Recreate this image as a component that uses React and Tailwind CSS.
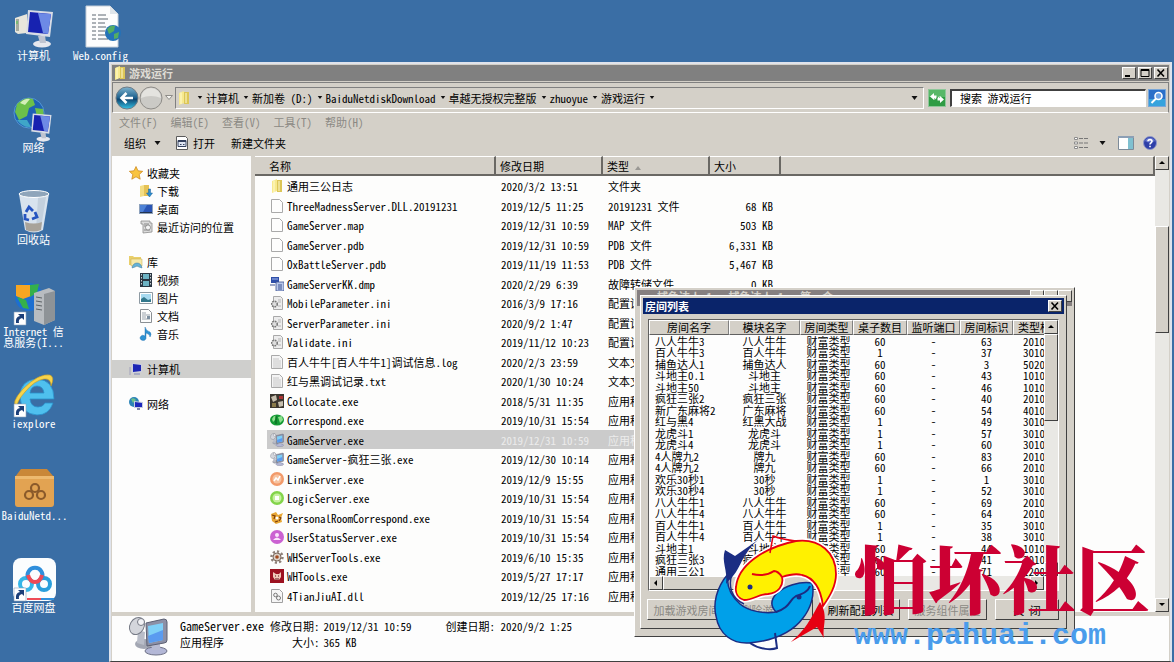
import { useState } from "react";

const files = [
  { name: "通用三公日志", date: "2020/3/2 13:51", type: "文件夹", size: "", icon: "folder" },
  { name: "ThreeMadnessServer.DLL.20191231", date: "2019/12/5 11:25", type: "20191231 文件", size: "68 KB", icon: "blank" },
  { name: "GameServer.map", date: "2019/12/31 10:59", type: "MAP 文件", size: "503 KB", icon: "blank" },
  { name: "GameServer.pdb", date: "2019/12/31 10:59", type: "PDB 文件", size: "6,331 KB", icon: "blank" },
  { name: "OxBattleServer.pdb", date: "2019/11/19 11:53", type: "PDB 文件", size: "5,467 KB", icon: "blank" },
  { name: "GameServerKK.dmp", date: "2020/2/29 6:39", type: "故障转储文件", size: "0 KB", icon: "dump" },
  { name: "MobileParameter.ini", date: "2016/3/9 17:16", type: "配置设置", size: "", icon: "ini" },
  { name: "ServerParameter.ini", date: "2020/9/2 1:47", type: "配置设置", size: "", icon: "ini" },
  { name: "Validate.ini", date: "2019/11/12 10:23", type: "配置设置", size: "", icon: "ini" },
  { name: "百人牛牛[百人牛牛1]调试信息.log", date: "2020/2/3 23:59", type: "文本文档", size: "", icon: "text" },
  { name: "红与黑调试记录.txt", date: "2020/1/30 10:24", type: "文本文档", size: "", icon: "text" },
  { name: "Collocate.exe", date: "2018/5/31 11:35", type: "应用程序", size: "", icon: "collocate" },
  { name: "Correspond.exe", date: "2019/10/31 15:54", type: "应用程序", size: "", icon: "globe" },
  { name: "GameServer.exe", date: "2019/12/31 10:59", type: "应用程序", size: "", icon: "server" },
  { name: "GameServer-疯狂三张.exe", date: "2019/12/30 10:14", type: "应用程序", size: "", icon: "server" },
  { name: "LinkServer.exe", date: "2019/12/9 15:55", type: "应用程序", size: "", icon: "link" },
  { name: "LogicServer.exe", date: "2019/10/31 15:54", type: "应用程序", size: "", icon: "logic" },
  { name: "PersonalRoomCorrespond.exe", date: "2019/10/31 15:54", type: "应用程序", size: "", icon: "room" },
  { name: "UserStatusServer.exe", date: "2019/10/31 15:54", type: "应用程序", size: "", icon: "user" },
  { name: "WHServerTools.exe", date: "2019/6/10 15:35", type: "应用程序", size: "", icon: "gear" },
  { name: "WHTools.exe", date: "2019/5/27 17:17", type: "应用程序", size: "", icon: "tools" },
  { name: "4TianJiuAI.dll", date: "2019/12/25 17:16", type: "应用程序扩展", size: "", icon: "dll" },
];

const rooms = [
  ["八人牛牛3", "八人牛牛", "60", "63", "2010"],
  ["百人牛牛3", "百人牛牛", "1", "37", "3010"],
  ["捕鱼达人1", "捕鱼达人", "60", "3", "5020"],
  ["斗地主0.1", "斗地主", "60", "43", "1010"],
  ["斗地主50", "斗地主", "60", "46", "1010"],
  ["疯狂三张2", "疯狂三张", "60", "40", "2010"],
  ["新广东麻将2", "广东麻将", "60", "54", "4010"],
  ["红与黑4", "红黑大战", "1", "49", "3010"],
  ["龙虎斗1", "龙虎斗", "1", "57", "3010"],
  ["龙虎斗4", "龙虎斗", "1", "60", "3010"],
  ["4人牌九2", "牌九", "60", "83", "2010"],
  ["4人牌九2", "牌九", "60", "66", "2010"],
  ["欢乐30秒1", "30秒", "1", "1", "3010"],
  ["欢乐30秒4", "30秒", "1", "52", "3010"],
  ["八人牛牛1", "八人牛牛", "60", "69", "2010"],
  ["八人牛牛4", "八人牛牛", "60", "64", "2010"],
  ["百人牛牛1", "百人牛牛", "1", "35", "3010"],
  ["百人牛牛4", "百人牛牛", "1", "38", "3010"],
  ["斗地主1", "斗地主", "60", "44", "1010"],
  ["疯狂三张3", "疯狂三张", "60", "41", "2010"],
  ["通用三公1", "通用三公", "60", "71", "1200"],
];

const crumbs = ["计算机", "新加卷 (D:)", "BaiduNetdiskDownload", "卓越无授权完整版", "zhuoyue", "游戏运行"];

const raised = "bg-[#d4d0c8] border border-t-white border-l-white border-r-[#404040] border-b-[#404040]";
const dither = "bg-[#e9e8e4]";

const App = () => {
  const [selected, setSelected] = useState("GameServer.exe");

  return (
    <div className="relative h-screen overflow-hidden bg-[#3a6ea5] text-[11px] leading-4 text-black font-['Noto_Sans_Mono_CJK_SC','Liberation_Mono','Noto_Sans_CJK_SC',monospace]">
      <Desktop />

      {/* EXPLORER */}
      <div className="absolute left-[109px] top-[62px] right-[2px] bottom-0 flex flex-col bg-[#d4d0c8] border-2 border-b border-[#dfe3ec] border-b-[#404040] p-px pb-0">
        <TitleBar />
        <AddressBar />
        <MenuBar />
        <Toolbar />
        <div className="flex flex-1 min-h-0">
          <Sidebar />
          <FileList selected={selected} onSelect={setSelected} />
          <div className="w-[14px] shrink-0 flex flex-col">
            <ScrollButton label="向上滚动" d="M3 7h6L6 4z" />
            <div className={`flex-1 flex flex-col ${dither}`}>
              <div className="basis-[13%]" />
              <div className={`basis-1/4 ${raised}`} />
            </div>
            <ScrollButton label="向下滚动" d="M3 4h6L6 7z" />
          </div>
        </div>
        <DetailsPane />
      </div>

      <ServerWindow />
      <Brand />
    </div>
  );
};

const Desktop = () => (
  <div className="flex items-start text-white">
    <div className="w-[67px]">
      <DesktopIcon label="计算机"><ComputerIcon /></DesktopIcon>
      <DesktopIcon label="网络"><NetworkIcon /></DesktopIcon>
      <DesktopIcon label="回收站"><RecycleIcon /></DesktopIcon>
      <DesktopIcon label="Internet 信息服务(I..."><IisIcon /></DesktopIcon>
      <DesktopIcon label="iexplore"><IeIcon /></DesktopIcon>
      <DesktopIcon label="BaiduNetd..."><BoxIcon /></DesktopIcon>
      <DesktopIcon label="百度网盘"><BaiduIcon /></DesktopIcon>
    </div>
    <div className="w-[67px]">
      <DesktopIcon label="Web.config"><ConfigIcon /></DesktopIcon>
    </div>
  </div>
);

const DesktopIcon = ({ label, children }) => (
  <button className="w-full h-[92px] pt-1 flex flex-col items-center">
    <span className="block size-[46px]">{children}</span>
    <span className="w-[66px] px-px text-center leading-[11px]">{label}</span>
  </button>
);

const Caret = ({ big }) => (
  <svg viewBox="0 0 6 4" className={big ? "w-[7px] h-[4px]" : "w-[6px] h-[3px]"}>
    <path d="M0 0h6L3 4z" fill="#111" />
  </svg>
);

const ScrollButton = ({ label, d }) => (
  <button aria-label={label} className={`size-[14px] shrink-0 ${raised}`}>
    <svg viewBox="0 0 12 12" className="size-3">
      <path d={d} fill="#000" />
    </svg>
  </button>
);

const WindowButton = ({ label, children }) => (
  <button aria-label={label} className={`w-[14px] h-3 ${raised}`}>
    <svg viewBox="0 0 12 10" className="w-3 h-[10px]" fill="none" stroke="#000">
      {children}
    </svg>
  </button>
);

const TitleBar = () => (
  <div className="h-4 shrink-0 flex items-center gap-[2px] px-px bg-[#808080] text-[#dedbd4]">
    <FolderIcon />
    <h1 className="flex-1 font-bold">游戏运行</h1>
    <WindowButton label="最小化"><path d="M2 8h5" strokeWidth="2" /></WindowButton>
    <WindowButton label="最大化"><path d="M2 1.5h8v7H2zM2 2.5h8" /></WindowButton>
    <WindowButton label="关闭"><path d="M2.5 1.500l6.500 7M9 1.500l-6.500 7" strokeWidth="1.600" /></WindowButton>
  </div>
);

const AddressBar = () => (
  <div className="h-[31px] shrink-0 mt-px flex items-center border border-[#808080] border-b-white px-[2px]">
    <button aria-label="后退">
      <svg viewBox="0 0 24 24" className="size-6">
        <defs>
          <linearGradient id="back" x1="0" y1="0" x2="0" y2="1">
            <stop offset="0" stopColor="#7fb4cf" />
            <stop offset=".5" stopColor="#1c5f8c" />
            <stop offset=".55" stopColor="#0d4470" />
            <stop offset="1" stopColor="#35c3e6" />
          </linearGradient>
        </defs>
        <circle cx="12" cy="12" r="11" fill="url(#back)" stroke="#6d7b85" />
        <path d="M18 12H7M11.500 7L6.500 12l5 5" fill="none" stroke="#fff" strokeWidth="2.600" />
      </svg>
    </button>
    <button aria-label="前进">
      <svg viewBox="0 0 24 24" className="size-6">
        <circle cx="12" cy="12" r="11" fill="#cbcac6" stroke="#8e8c88" />
        <path d="M2 12a10 10 0 0 1 20 0q-10-4-20 0" fill="#e4e3df" />
      </svg>
    </button>
    <button aria-label="最近的页面" className="mx-[2px]">
      <svg viewBox="0 0 8 5" className="w-2 h-[5px]">
        <path d="M.5.500h7L4 4.500z" fill="#f5f4f0" stroke="#8e8c88" />
      </svg>
    </button>
    <nav aria-label="地址" className="flex-1 h-[22px] flex items-center border border-[#808080] border-r-white border-b-white px-px whitespace-nowrap">
      <FolderIcon />
      <span className="ml-[6px]"><Caret /></span>
      {crumbs.map((c) => (
        <span key={c} className="flex items-center gap-1 pl-[3px]">
          <a href="#">{c}</a>
          <Caret />
        </span>
      ))}
      <span className="ml-auto mr-1"><Caret big /></span>
    </nav>
    <button aria-label="刷新" className="mx-1">
      <svg viewBox="0 0 18 18" className="size-[18px]">
        <rect x=".5" y=".5" width="17" height="17" fill="#2f9c44" stroke="#8fc79a" />
        <path d="M1 1h16v7H1z" fill="#58b868" />
        <path d="M2 7.500L6 4v2.500h2.500v2.500l-2 2V9H6v2zM16 10.500L12 14v-2.500H9.500V9l2-2v2h.5V7z" fill="#fff" />
      </svg>
    </button>
    <input
      aria-label="搜索"
      defaultValue="搜索 游戏运行"
      className="w-[196px] h-[18px] px-2 bg-white border border-t-2 border-l-2 border-[#404040] border-r-white border-b-white"
    />
    <button aria-label="开始搜索" className="ml-[2px]">
      <svg viewBox="0 0 18 18" className="size-[18px]">
        <rect x=".5" y=".5" width="17" height="17" fill="#2a6fc9" stroke="#7aa7d8" />
        <path d="M1 10h16v7H1z" fill="#36a3dd" />
        <circle cx="10.500" cy="7" r="3.500" fill="#6ea4e6" stroke="#fff" strokeWidth="1.600" />
        <path d="M8 9.500L3.500 14" stroke="#fff" strokeWidth="2" />
      </svg>
    </button>
  </div>
);

const MenuBar = () => (
  <div className="h-[17px] shrink-0 flex items-center gap-[13px] pl-[7px] text-[#8b8984]">
    <button>文件(F)</button>
    <button>编辑(E)</button>
    <button>查看(V)</button>
    <button>工具(T)</button>
    <button>帮助(H)</button>
  </div>
);

const Toolbar = () => (
  <div className="h-[26px] shrink-0 flex items-center pl-3 pr-3">
    <button className="flex items-center gap-2">组织 <Caret big /></button>
    <button className="ml-[14px] flex items-center gap-1">
      <svg viewBox="0 0 14 14" className="size-[14px]">
        <path d="M1.500.500h9l2 2v11h-11z" fill="#fff" stroke="#5b5b5b" />
        <path d="M3 4.500h8v6H3z" fill="#dfe6f3" stroke="#33405e" />
        <path d="M3 5h8" stroke="#33405e" strokeWidth="2" />
        <path d="M5 8.500h1.500M8 8.500h1.500" stroke="#33405e" />
      </svg>
      打开
    </button>
    <button className="ml-4">新建文件夹</button>
    <div className="ml-auto flex items-center">
      <button aria-label="更改您的视图" className="flex items-center gap-[11px]">
        <svg viewBox="0 0 14 14" className="size-[14px]" fill="none" stroke="#8d8d8d">
          <path d="M.5 1.500h3v2h-3zM.5 6h3v2h-3zM.5 10.500h3v2h-3z" fill="#fff" />
          <path d="M5 2.500h4M10 2.500h4M5 7h4M10 7h4M5 11.500h4M10 11.500h4" stroke="#777" />
        </svg>
        <Caret big />
      </button>
      <button aria-label="显示预览窗格" className="ml-3">
        <svg viewBox="0 0 16 14" className="w-4 h-[14px]">
          <path d="M.5.500h15v13H.5z" fill="#fff" stroke="#7d8b99" />
          <path d="M0 0h16v2H0z" fill="#8c9fb5" />
          <path d="M10 2h5v11h-5z" fill="#7fc0d0" />
        </svg>
      </button>
      <button aria-label="获取帮助" className="ml-[9px]">
        <svg viewBox="0 0 14 14" className="size-[14px]">
          <circle cx="7" cy="7" r="6.500" fill="#2d3fa8" stroke="#8f97c9" />
          <path d="M2 5a5.500 5.500 0 0 1 10 0Q7 8 2 5" fill="#6475cd" />
          <path d="M5 5.300C5 3 9 3 9 5.300 9 6.800 7 6.800 7 8.500M7 9.800v1.500" fill="none" stroke="#fff" strokeWidth="1.600" />
        </svg>
      </button>
    </div>
  </div>
);

const SideItem = ({ label, icon, sub, active }) => (
  <li className={`h-[18px] ${active ? "bg-[#cfcfcd]" : ""}`}>
    <a href="#" className={`flex items-center gap-1 h-full ${sub ? "pl-[27px]" : "pl-[17px]"}`}>
      <svg viewBox="0 0 14 14" className="size-[14px]">{icon}</svg>
      {label}
    </a>
  </li>
);

const Sidebar = () => (
  <div className="w-[143px] shrink-0 bg-[#fdfdfd] border-r-4 border-[#d4d0c8] pt-2">
    <ul>
      <SideItem label="收藏夹" icon={<path d="M7 .5l2 4.300 4.700.500-3.500 3.200 1 4.700L7 10.800l-4.200 2.400 1-4.700L.3 5.300 5 4.800z" fill="#f9c440" stroke="#c98318" strokeWidth=".7" />} />
      <SideItem sub label="下载" icon={<>
        <path d="M1 2l4-1v11l-4 1z" fill="#f3dd84" /><path d="M5 1h5v11H5z" fill="#e5c256" />
        <path d="M9.500 5v4H7.500l3 4 3-4h-2V5z" fill="#2c8fd0" stroke="#1a5f98" strokeWidth=".5" />
      </>} />
      <SideItem sub label="桌面" icon={<>
        <path d="M0 2h14v10H0z" fill="#8ea2bd" /><path d="M1 3h12v7H1z" fill="#2a55b5" /><path d="M1 3h7L4 10H1z" fill="#4e82d6" /><path d="M1 10.500h12" stroke="#22344f" />
      </>} />
      <SideItem sub label="最近访问的位置" icon={<>
        <path d="M2 1h9v2h2v9l-9 1V4H2z" fill="#dcdcdc" stroke="#8b8b8b" strokeWidth=".8" /><path d="M5 4h5M5 6h3M5 10h6" stroke="#888" /><circle cx="9" cy="7.500" r="2.500" fill="#f3f3f3" stroke="#777" strokeWidth=".7" />
      </>} />
    </ul>
    <ul className="mt-[17px]">
      <SideItem label="库" icon={<>
        <path d="M0 1h4l1 1h7v8H0z" fill="#e9cf6b" /><path d="M2 4h11v7H2z" fill="#f6e9a9" stroke="#c5aa4c" strokeWidth=".5" /><path d="M3 13q1-5 5-5t5 5l-3-1q-2-2-4 0z" fill="#65b2d8" stroke="#38789d" strokeWidth=".5" />
      </>} />
      <SideItem sub label="视频" icon={<>
        <path d="M1 0h12v14H1z" fill="#2a3642" /><path d="M4 1h6v5H4zM4 8h6v5H4z" fill="#6db3c4" /><path d="M2.500 1v12M11.500 1v12" stroke="#c8d0d5" strokeDasharray="1.500 1.500" />
      </>} />
      <SideItem sub label="图片" icon={<>
        <path d="M.5 1.500h13v11H.5z" fill="#fff" stroke="#8e9aa3" /><path d="M2 3h10v8H2z" fill="#a8daf0" /><path d="M2 11V8l3-2 4 3 3-1v3z" fill="#33788c" />
      </>} />
      <SideItem sub label="文档" icon={<>
        <path d="M1.500.500h8l3 3v10h-11z" fill="#fcfcfc" stroke="#8a8f94" /><path d="M3 4h4M3 6h8M3 8h4M3 10h8" stroke="#9aa3ac" /><path d="M8 7h3v3H8z" fill="#7d8fa0" />
      </>} />
      <SideItem sub label="音乐" icon={<path d="M6 0q1 4 5 5 2 2 0 5 0-3-4-4v5.500A3 2.500 0 1 1 6 9z" fill="#2f93d3" stroke="#1868a8" strokeWidth=".4" />} />
    </ul>
    <ul className="mt-[17px]">
      <SideItem active label="计算机" icon={<>
        <path d="M0 5h2v8H0z" fill="#b8b8c4" /><path d="M3 1l10 1v8l-10 1z" fill="#cdd0de" /><path d="M4 2l8 1v6l-8 1z" fill="#1c26b5" /><path d="M5 11h6v2H5z" fill="#a6abc2" />
      </>} />
    </ul>
    <ul className="mt-[17px]">
      <SideItem label="网络" icon={<>
        <circle cx="5" cy="5" r="5" fill="#2c84b8" /><path d="M2 2q3-2 5 1L4 6z" fill="#6fc08a" /><path d="M5 4l9 1v6H5z" fill="#c8cde0" /><path d="M6 5l7 1v4H6z" fill="#1d28bb" /><path d="M8 11h3v2H8z" fill="#7f86a8" />
      </>} />
    </ul>
  </div>
);

const headCell = "h-5 font-normal text-left bg-[#d4d0c8] border-b-2 border-r-2 border-[#6a6864] border-t border-t-white";

const FileList = ({ selected, onSelect }) => (
  <div className="flex-1 min-w-0 overflow-hidden bg-[#fdfdfc]">
    <table className="w-full table-fixed border-separate border-spacing-0 whitespace-nowrap">
      <thead>
        <tr>
          <th className={`${headCell} w-[241px] pl-[14px]`}>名称</th>
          <th className={`${headCell} w-[107px] pl-1`}>修改日期</th>
          <th className={`${headCell} w-[107px] pl-1`}>
            类型 <svg viewBox="0 0 6 4" className="inline w-[6px] h-1"><path d="M0 4h6L3 0z" fill="#9a9894" /></svg>
          </th>
          <th className={`${headCell} w-[71px] pl-1`}>大小</th>
          <th className={headCell} />
        </tr>
      </thead>
      <tbody>
        {files.map((f) => {
          const active = f.name === selected;
          const cell = active ? "p-0 pl-[5px] bg-[#cbcbcb] text-[#ececec]" : "p-0 pl-[5px]";
          return (
            <tr key={f.name} onClick={() => onSelect(f.name)} className="odd:h-5 even:h-[19px]">
              <td className="p-0 pl-3">
                <div className={`flex items-center gap-[3px] pl-[3px] h-[19px] ${active ? "bg-[#cbcbcb]" : ""}`}>
                  <FileIcon type={f.icon} />
                  {f.name}
                </div>
              </td>
              <td className={cell}>{f.date}</td>
              <td className={cell}>{f.type}</td>
              <td className={`${cell} text-right pr-2`}>{f.size}</td>
              <td className="p-0" />
            </tr>
          );
        })}
      </tbody>
    </table>
  </div>
);

const DetailsPane = () => (
  <div className="h-[49px] shrink-0 flex items-start border-t-4 border-[#d4d0c8] bg-[#fdfdfd] pl-4">
    <div className="size-10"><ServerIcon /></div>
    <div className="ml-3 pt-[2px] flex gap-[6px]">
      <div>
        <p className="text-[12px]">GameServer.exe</p>
        <p>应用程序</p>
      </div>
      <dl className="grid grid-cols-[auto_auto] gap-x-1">
        <dt className="text-right">修改日期:</dt>
        <dd>2019/12/31 10:59</dd>
        <dt className="text-right">大小:</dt>
        <dd>365 KB</dd>
      </dl>
      <p className="ml-7">创建日期: 2020/9/2 1:25</p>
    </div>
  </div>
);

/* ROOM LIST */
const roomHead = "h-[15px] p-0 font-normal bg-[#d4d0c8] border border-t-white border-l-white border-r-[#808080] border-b-[#606060]";

const ServerWindow = () => (
  <div className={`absolute left-[634px] top-[287px] w-[441px] h-[350px] p-[2px] ${raised}`}>
    <div className="h-4 flex items-start bg-[#857f80] text-[#d4d0c8] overflow-hidden">
      <p className="flex-1 pl-5 font-bold leading-3 whitespace-nowrap">捕鱼达人 1 - 捕鱼达人 1 - 第一个</p>
      <WindowButton label="最小化" />
      <WindowButton label="最大化" />
      <WindowButton label="关闭" />
    </div>
    <div role="dialog" aria-label="房间列表" className={`absolute left-[5px] top-[7px] w-[427px] flex flex-col p-[2px] pb-2 ${raised}`}>
      <div className="h-4 flex items-center justify-between px-[2px] bg-[#0a246a] text-white">
        <h2 className="font-bold">房间列表</h2>
        <WindowButton label="关闭"><path d="M2.500 1.500l6.500 7M9 1.500l-6.500 7" strokeWidth="1.600" /></WindowButton>
      </div>
      <div className="mx-[5px] mt-[5px] h-[272px] flex flex-col border border-t-[#606060] border-l-[#606060] border-white bg-[#fdfdfd]">
        <div className="flex flex-1 min-h-0">
          <div className="flex-1 min-w-0 overflow-hidden">
            <table className="w-[446px] table-fixed border-separate border-spacing-0 whitespace-nowrap text-center leading-[11px]">
              <thead>
                <tr>
                  <th className={`${roomHead} w-[80px]`}>房间名字</th>
                  <th className={`${roomHead} w-[71px]`}>模块名字</th>
                  <th className={`${roomHead} w-[53px]`}>房间类型</th>
                  <th className={`${roomHead} w-[54px]`}>桌子数目</th>
                  <th className={`${roomHead} w-[53px]`}>监听端口</th>
                  <th className={`${roomHead} w-[53px]`}>房间标识</th>
                  <th className={`${roomHead} pl-1 text-left`}>类型标识</th>
                </tr>
              </thead>
              <tbody>
                {rooms.map((r, i) => (
                  <tr key={i} className="odd:h-3 even:h-[11px]">
                    <td className="p-0 pl-[6px] text-left">{r[0]}</td>
                    <td className="p-0">{r[1]}</td>
                    <td className="p-0 pl-1">财富类型</td>
                    <td className="p-0">{r[2]}</td>
                    <td className="p-0">-</td>
                    <td className="p-0">{r[3]}</td>
                    <td className="p-0 pl-[10px] text-left">{r[4]}</td>
                  </tr>
                ))}
              </tbody>
            </table>
          </div>
          <div className={`w-[14px] flex flex-col ${dither}`}>
            <ScrollButton label="向上滚动" d="M3 7h6L6 4z" />
            <div className={`h-[87px] ${raised}`} />
            <div className="flex-1" />
            <ScrollButton label="向下滚动" d="M3 4h6L6 7z" />
          </div>
        </div>
        <div className={`h-[14px] shrink-0 flex mr-[14px] ${dither}`}>
          <ScrollButton label="向左滚动" d="M7 3v6L4 6z" />
          <div className={`w-[156px] ${raised}`} />
          <div className="flex-1" />
          <ScrollButton label="向右滚动" d="M4 3v6l3-3z" />
        </div>
      </div>
      <div className="mt-2 mx-1 flex gap-2 whitespace-nowrap">
        <button disabled className={`w-[79px] h-[21px] text-[#8b8984] ${raised}`}>加载游戏房间</button>
        <button disabled className={`w-[79px] h-[21px] text-[#8b8984] ${raised}`}>删除游戏房间</button>
        <button className={`w-[79px] h-[21px] ${raised}`}>刷新配置列表</button>
        <button disabled className={`w-[79px] h-[21px] text-[#8b8984] ${raised}`}>服务组件属性</button>
        <button className={`w-16 h-[21px] ${raised}`}>关 闭</button>
      </div>
    </div>
  </div>
);

const Brand = () => (
  <div className="absolute left-[710px] top-[530px] flex pointer-events-none">
    <svg viewBox="0 0 130 122" className="w-[130px] h-[122px] shrink-0">
      {/* blue fish */}
      <path d="M18 44C6 58 3 74 6 86c3 19 17 28 33 27 22-2 42-9 54-25 8-10 12-24 9-35-12-2-28 3-36 11-6 7-5 13 0 18-12 2-28-1-36-8-9-8-14-18-12-30z" fill="#00a0e9" stroke="#1b2d83" strokeWidth="1.500" />
      <path d="M15 20l10 6 23-16C36 20 32 32 26 42c-4 6-7 8-10 12 2-14-5-22-1-34z" fill="#1b2d83" />
      <path d="M40 113c10 7 22 7 27 5l-2-15" fill="none" stroke="#1b2d83" strokeWidth="2" />
      {/* yellow fish */}
      <path d="M26 57C28 36 52 18 86 11c24-3 40 12 40 33 0 12-6 22-13 32-2-16-8-28-21-31-7-2-14 0-20 2 2 9-4 16-14 17-10 0-14 6-24 6-6-2-9-7-8-13z" fill="#fff100" stroke="#fff" strokeWidth="5" />
      <path d="M26 57C28 36 52 18 86 11c24-3 40 12 40 33 0 12-6 22-13 32-2-16-8-28-21-31-7-2-14 0-20 2 2 9-4 16-14 17-10 0-14 6-24 6-6-2-9-7-8-13z" fill="#fff100" stroke="#e60012" strokeWidth="1.800" />
      <path d="M22 44c-4 12-1 24 12 30" fill="none" stroke="#1b2d83" strokeWidth="1.500" />
      <path d="M42 44c8 2 16 1 22-3 3 0 6 3 8 6" fill="none" stroke="#e60012" strokeWidth="2" />
      <path d="M60 23l3-17c8 3 14 4 23 5" fill="none" stroke="#e60012" strokeWidth="1.500" />
      <path d="M110 72c9 14 2 24 4 36l-7-11-26 15c15-13 19-22 29-40z" fill="#e60012" />
      <path d="M100 56c-2 6-8 8-14 10-7 4-6 12-20 16" fill="none" stroke="#1b2d83" strokeWidth="2" />
      <circle cx="40" cy="57" r="2.500" fill="#1b2d83" />
      <circle cx="89" cy="67" r="2.500" fill="#1b2d83" />
    </svg>
    <div className="pl-[14px] pt-1 whitespace-nowrap">
      <p className="text-[74px] leading-[84px] font-black text-[#cc0033] font-['Noto_Serif_CJK_SC','Noto_Sans_CJK_SC',serif]">怕坏社区</p>
      <p className="text-[30px] leading-9 font-bold text-[#4a9ceb] font-['Liberation_Mono',monospace]">www.pahuai.com</p>
    </div>
  </div>
);

/* ICONS */
const FolderIcon = () => (
  <svg viewBox="0 0 14 14" className="size-[14px] shrink-0">
    <path d="M2 2l5-2v12l-5 2z" fill="#f7e98e" />
    <path d="M7 1h5v12H7z" fill="#dcc657" />
    <path d="M4 1.500V13M9 2v10" stroke="#fffbd0" />
  </svg>
);

const fileIcons = {
  blank: <path d="M1.500.500h8l3 3v10h-11z" fill="#fdfdfd" stroke="#a9a9a9" />,
  dump: <>
    <path d="M1 0h8v6H1z" fill="#2f4fa8" /><path d="M2 2h6" stroke="#a9bbef" /><path d="M6 5h8v9H6z" fill="#b9c8ea" stroke="#3d5291" strokeWidth=".8" /><path d="M8 8h4M8 10h4M8 12h4M0 8h5" stroke="#3d5291" />
  </>,
  ini: <>
    <path d="M3.500.500h7l2 2v11h-9z" fill="#ececec" stroke="#a9a9a9" /><path d="M8 4h3M8 6h3M8 10h3" stroke="#b5b5b5" /><circle cx="4.500" cy="8" r="2.800" fill="#ddd" stroke="#777" strokeWidth="1.500" strokeDasharray="1.800 .8" />
  </>,
  text: <>
    <path d="M1.500.500h8l3 3v10h-11z" fill="#f4f4f4" stroke="#a9a9a9" /><path d="M3 4h6M3 6h8M3 8h8M3 10h8M3 12h8" stroke="#bdbdbd" strokeWidth=".8" />
  </>,
  collocate: <>
    <path d="M0 0h14v14H0z" fill="#3a352e" /><path d="M1 3l5-2 1 5-4 2zM8 8l5-1v5l-4 1z" fill="#c7bfae" /><path d="M2 9h4v4H2z" fill="#8a7a4a" /><path d="M9 2h4v3H9z" fill="#a33" />
  </>,
  globe: <>
    <ellipse cx="7" cy="7" rx="7" ry="5.500" fill="#149a34" /><path d="M2 6q2-4 4-3l-1 4-2 2zM8 4l4-1 1 4-3 3z" fill="#8ce08c" /><path d="M6 3v8" stroke="#075c1b" />
  </>,
  link: <>
    <circle cx="7" cy="7" r="7" fill="#f29a6a" /><circle cx="7" cy="7" r="4.500" fill="#f7c3a0" /><path d="M4 9l2-3 2 2 2-4" stroke="#fff" strokeWidth="1.600" fill="none" />
  </>,
  logic: <>
    <circle cx="7" cy="7" r="7" fill="#83d44a" /><circle cx="7" cy="7" r="4.500" fill="#c6f09f" /><path d="M5 5h4v4H5z" fill="#fff" />
  </>,
  room: <>
    <path d="M1 3l5-2 2 3 5-2-2 5 1 4-6 2-4-3z" fill="#e8a734" /><path d="M2 4l3 1-1 3M9 6l2 1-2 3M5 11l3-1" stroke="#7b3d0c" strokeWidth="1.200" fill="none" /><circle cx="7" cy="7" r="1.500" fill="#fff" />
  </>,
  user: <>
    <circle cx="7" cy="7" r="7" fill="#cb62d2" /><circle cx="7" cy="5" r="2" fill="#fbe4fc" /><path d="M3 10q4-5 8 0z" fill="#fbe4fc" />
  </>,
  gear: <>
    <circle cx="7" cy="7" r="5.500" fill="none" stroke="#8d8078" strokeWidth="2.500" strokeDasharray="2.200 2" /><circle cx="7" cy="7" r="4" fill="#d9cfc6" stroke="#7d6b5f" /><circle cx="7" cy="7" r="1.800" fill="#a34b1f" />
  </>,
  tools: <>
    <path d="M0 0h14v14H0z" fill="#9c1220" /><path d="M3 3l3 2h3l2-2v5l-2 3H5L3 8z" fill="#f0c9b8" /><path d="M5 7h1M8 7h1M5 10h4" stroke="#5d0b14" />
  </>,
  dll: <>
    <path d="M1.500.500h8l3 3v10h-11z" fill="#f6f6f6" stroke="#a0a0a0" /><circle cx="5.500" cy="6" r="1.800" fill="none" stroke="#777" /><circle cx="8.500" cy="9" r="2" fill="none" stroke="#777" />
  </>,
};

const FileIcon = ({ type }) => {
  if (type === "folder") return <FolderIcon />;
  if (type === "server") return <span className="size-[14px] shrink-0"><ServerIcon /></span>;
  return <svg viewBox="0 0 14 14" className="size-[14px] shrink-0">{fileIcons[type]}</svg>;
};

const ServerIcon = () => (
  <svg viewBox="0 0 40 40" className="size-full">
    <ellipse cx="16" cy="28" rx="9" ry="5" fill="#a3a7b3" />
    <path d="M10 14l7 2-1 13-7-2z" fill="#b9bdc8" />
    <ellipse cx="28" cy="35" rx="11" ry="4" fill="#b3b7d6" stroke="#6d7085" />
    <path d="M24 27h8v7h-8z" fill="#b7bbd2" />
    <path d="M18 7l18-4q3 0 3 3v18q0 3-3 3l-17 3z" fill="#8c90a6" stroke="#5c6072" />
    <path d="M20 10l15-3v17l-14 3z" fill="#7fd0f7" />
    <path d="M20 20l15-6v10l-14 3z" fill="#5a9bf0" />
    <ellipse cx="9" cy="10" rx="7" ry="9" transform="rotate(30 9 10)" fill="#d4d6dc" stroke="#777b86" />
    <circle cx="13" cy="6" r="3.500" fill="#f2f2f5" stroke="#777b86" />
  </svg>
);

const Shortcut = () => (
  <g>
    <path d="M3 32h12v13H3z" fill="#fff" stroke="#8da2b8" strokeWidth=".6" />
    <path d="M5 43q-1-6 4-7l-2-2h6v6l-2-2q-4 1-3 5z" fill="#1c3f78" />
  </g>
);

const Monitor = () => (
  <>
    <ellipse cx="31" cy="40" rx="9" ry="3.500" fill="#e6e8ee" />
    <path d="M27 32l7-1 1 8h-6z" fill="#bfc4d0" />
    <path d="M17 6l25 2-3 25-24-3z" fill="#d9dde6" />
    <path d="M19 8l21 2-3 20-20-2z" fill="#1722b0" />
    <path d="M27 9l13 1-3 20-5-1z" fill="#6d8ae6" />
  </>
);

const ComputerIcon = () => (
  <svg viewBox="0 0 46 46" className="size-full">
    <path d="M4 14l12-4v19l-9 1-3-2z" fill="#e8e6dc" /><path d="M5 15h3v12H5z" fill="#a5ab9f" /><path d="M6 17v3" stroke="#4fc84b" />
    <Monitor />
  </svg>
);

const NetworkIcon = () => (
  <svg viewBox="0 0 46 46" className="size-full">
    <circle cx="18" cy="17" r="15" fill="#1f62b4" stroke="#5fa3dd" strokeWidth=".8" />
    <path d="M6 8q8-8 16-5l2 6-6 3-2 8-8 4-4-8zM24 12l8 1 1 8-6 4z" fill="#6cc04a" />
    <path d="M9 7q5-5 10-4l-5 6z" fill="#d3efb8" />
    <path d="M6 24q6 8 14 7l-4-7z" fill="#3fa6c8" />
    <g transform="translate(9 13) scale(.75)"><Monitor /></g>
  </svg>
);

const RecycleIcon = () => (
  <svg viewBox="0 0 46 46" className="size-full">
    <path d="M8 6h30l-6 36q-9 5-18 0z" fill="#e6edf4" opacity=".92" />
    <ellipse cx="23" cy="6" rx="15" ry="3.500" fill="#8fa5ba" stroke="#fff" />
    <path d="M27 10l8-1-5 31-5 2z" fill="#c3d0dd" />
    <path d="M14 34q9 3 17 0l-1 8q-8 3-15 0z" fill="#a8a39a" />
    <path d="M15 24l3-5 4 4M24 24l2 5-5 2M18 32l-4-1 0-5" fill="none" stroke="#2554c0" strokeWidth="2.800" />
  </svg>
);

const IisIcon = () => (
  <svg viewBox="0 0 46 46" className="size-full">
    <circle cx="18" cy="17" r="14" fill="#1d6fd0" />
    <path d="M5 5h15v11l-8 3-7-3z" fill="#f6a623" />
    <path d="M6 17l9 3 3 9-6-1zM19 5l9-1-2 9-7 4z" fill="#35b04a" />
    <path d="M23 13l15-5 6 3v29l-11 5-10-4z" fill="#b8bcc0" />
    <path d="M33 14l11-3v29l-11 5z" fill="#8e9397" />
    <path d="M25 17l6 1M25 21l6 1M25 25l6 1M25 29l6 1" stroke="#5c6266" />
    <Shortcut />
  </svg>
);

const IeIcon = () => (
  <svg viewBox="0 0 46 46" className="size-full">
    <path d="M43 27H19q1 8 8 8 5 0 7-4h8q-4 12-16 12Q10 42 9 25 9 8 26 7q17 1 17 20zM19 21h14q-1-7-7-7t-7 7z" fill="#4fc0ee" stroke="#2a8fca" strokeWidth=".8" />
    <path d="M6 36Q-1 31 12 17 28 1 39 3q5 2 1 11 0-8-7-7Q24 8 14 20 5 30 6 36z" fill="#f7d44c" stroke="#c79a1f" strokeWidth=".6" />
    <Shortcut />
  </svg>
);

const BoxIcon = () => (
  <svg viewBox="0 0 46 46" className="size-full">
    <path d="M10 5h26l7 8H4z" fill="#c98738" />
    <path d="M4 12h39v28q0 3-3 3H7q-3 0-3-3z" fill="#e2a352" />
    <path d="M4 12h39v3H4z" fill="#edb96f" />
    <g fill="none" stroke="#8b5a2a" strokeWidth="2.200">
      <circle cx="24" cy="24" r="4" /><circle cx="18" cy="31" r="4" /><circle cx="30" cy="31" r="4" />
    </g>
  </svg>
);

const BaiduIcon = () => (
  <svg viewBox="0 0 46 46" className="size-full">
    <rect x="2" y="2" width="43" height="43" rx="8" fill="#fbfdfe" />
    <g fill="none" strokeWidth="4">
      <circle cx="15" cy="28" r="6" stroke="#35b6e8" /><circle cx="33" cy="28" r="6" stroke="#2a9fdc" />
      <path d="M17 22a7.500 7.500 0 1 1 14 0" stroke="#2f8fdc" />
      <path d="M17 19q2 7 7 7t7-7" stroke="#ee4a56" />
    </g>
    <path d="M16 43h14" stroke="#ee4a56" strokeWidth="2" />
    <path d="M30 43h13" stroke="#2f8fdc" strokeWidth="2" />
    <Shortcut />
  </svg>
);

const ConfigIcon = () => (
  <svg viewBox="0 0 46 46" className="size-full">
    <path d="M8 2h24l8 8v33H8z" fill="#fdfdfd" stroke="#c5ced8" />
    <path d="M32 2v8h8z" fill="#dfe5ea" />
    <path d="M14 11h4M20 11h8M14 15h4M20 15h10M14 19h4M20 19h7M14 23h4M20 23h8M14 27h4M20 27h7M14 31h4M20 31h9M14 35h4M20 35h10" stroke="#5d6670" />
    <circle cx="35" cy="29" r="8" fill="#2472b8" />
    <path d="M29 25q4-5 8-3l-1 5-5 3zM36 30l5-2-1 6-4 1z" fill="#53ad63" />
  </svg>
);

export default App;
